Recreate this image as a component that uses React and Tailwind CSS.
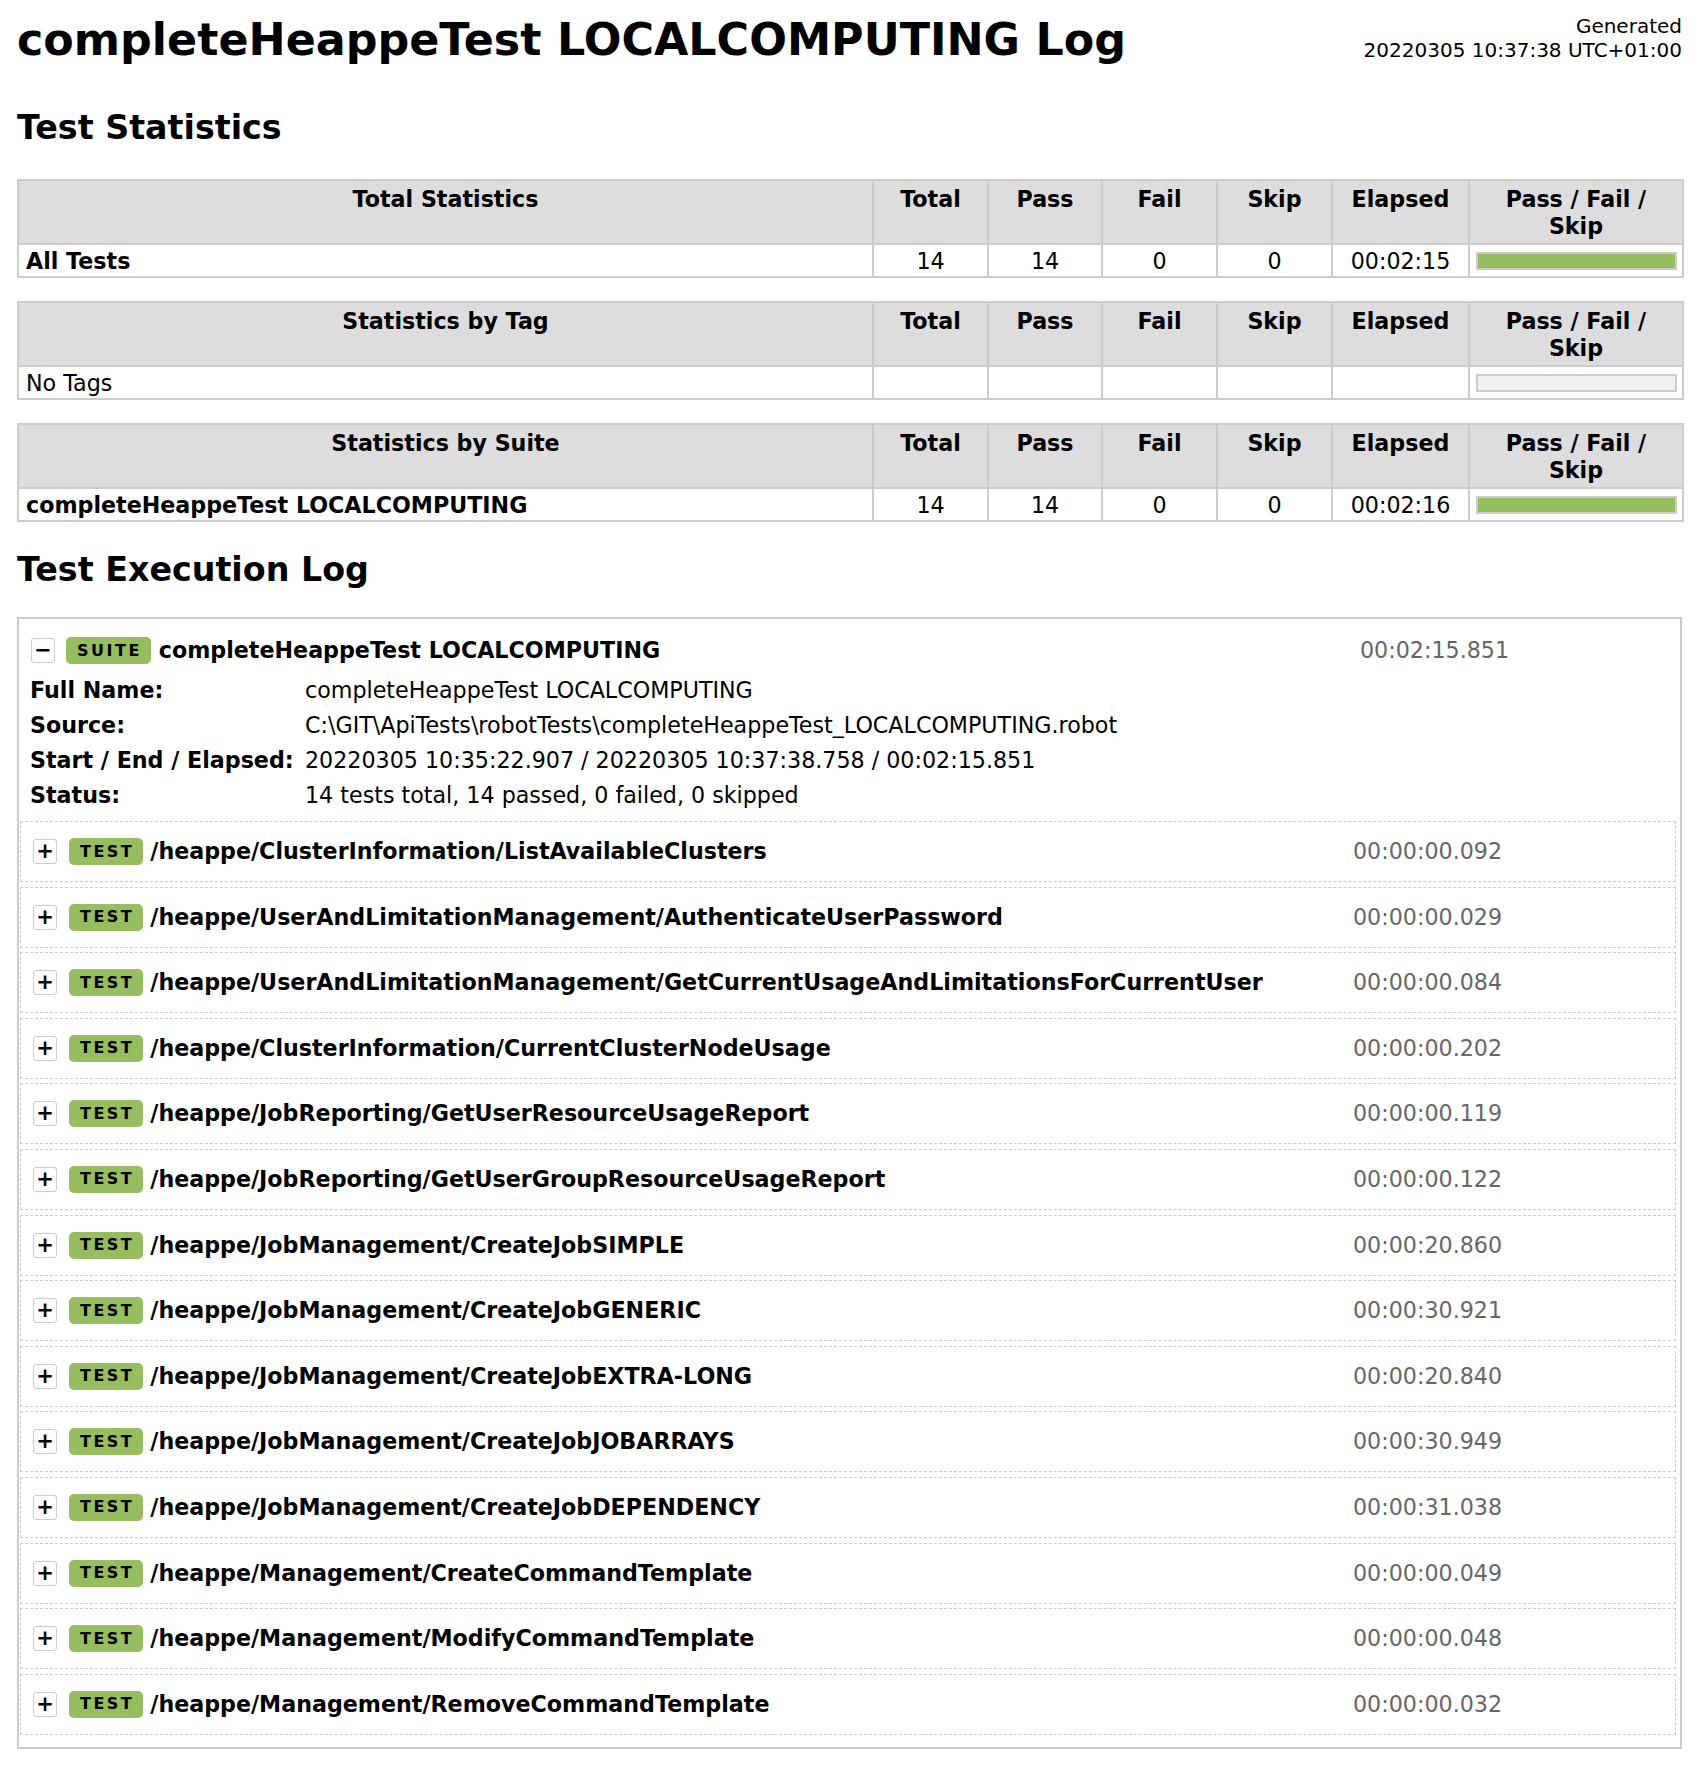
import React from 'react';

const TESTS = [
  ['/heappe/ClusterInformation/ListAvailableClusters', '00:00:00.092'],
  ['/heappe/UserAndLimitationManagement/AuthenticateUserPassword', '00:00:00.029'],
  ['/heappe/UserAndLimitationManagement/GetCurrentUsageAndLimitationsForCurrentUser', '00:00:00.084'],
  ['/heappe/ClusterInformation/CurrentClusterNodeUsage', '00:00:00.202'],
  ['/heappe/JobReporting/GetUserResourceUsageReport', '00:00:00.119'],
  ['/heappe/JobReporting/GetUserGroupResourceUsageReport', '00:00:00.122'],
  ['/heappe/JobManagement/CreateJobSIMPLE', '00:00:20.860'],
  ['/heappe/JobManagement/CreateJobGENERIC', '00:00:30.921'],
  ['/heappe/JobManagement/CreateJobEXTRA-LONG', '00:00:20.840'],
  ['/heappe/JobManagement/CreateJobJOBARRAYS', '00:00:30.949'],
  ['/heappe/JobManagement/CreateJobDEPENDENCY', '00:00:31.038'],
  ['/heappe/Management/CreateCommandTemplate', '00:00:00.049'],
  ['/heappe/Management/ModifyCommandTemplate', '00:00:00.048'],
  ['/heappe/Management/RemoveCommandTemplate', '00:00:00.032'],
];

const META = [
  ['Full Name:', 'completeHeappeTest LOCALCOMPUTING'],
  ['Source:', 'C:\\GIT\\ApiTests\\robotTests\\completeHeappeTest_LOCALCOMPUTING.robot'],
  ['Start / End / Elapsed:', '20220305 10:35:22.907 / 20220305 10:37:38.758 / 00:02:15.851'],
  ['Status:', '14 tests total, 14 passed, 0 failed, 0 skipped'],
];

function StatTable({ title, row, className }) {
  const th = 'border border-[#ccc] bg-[#ddd] pt-[5px] pb-[3px] px-[6px] align-top text-center font-bold';
  const td = 'border border-[#ccc] pt-[3px] pb-[1px] px-[6px] text-center';
  return (
    <table className={`w-[1665px] table-fixed border-separate border-spacing-0 border border-[#ccc] text-[22.2px] leading-[27px] ${className}`}>
      <colgroup>
        <col className="w-[855px]" />
        <col className="w-[115px]" />
        <col className="w-[114px]" />
        <col className="w-[115px]" />
        <col className="w-[115px]" />
        <col className="w-[137px]" />
        <col className="w-[214px]" />
      </colgroup>
      <thead>
        <tr>
          <th className={th}>{title}</th>
          <th className={th}>Total</th>
          <th className={th}>Pass</th>
          <th className={th}>Fail</th>
          <th className={th}>Skip</th>
          <th className={th}>Elapsed</th>
          <th className={th}>Pass / Fail / Skip</th>
        </tr>
      </thead>
      <tbody>
        <tr>
          <td className={`border border-[#ccc] pt-[3px] pb-[1px] px-[7px] text-left ${row.bold ? 'font-bold' : ''}`}>{row.name}</td>
          <td className={td}>{row.total}</td>
          <td className={td}>{row.pass}</td>
          <td className={td}>{row.fail}</td>
          <td className={td}>{row.skip}</td>
          <td className={td}>{row.elapsed}</td>
          <td className="border border-[#ccc] pt-[2px] pb-[2px] pl-[6px] pr-[5px] align-middle">
            {row.empty ? (
              <div className="h-[18px] w-full border-2 border-[#ccc] bg-[#f0f0f0]" />
            ) : (
              <div className="h-[18px] w-full border-2 border-[#ccc] bg-[#97bd61]" />
            )}
          </td>
        </tr>
      </tbody>
    </table>
  );
}

function Toggle({ sign }) {
  return (
    <div className="flex h-[25px] w-[24px] shrink-0 items-center justify-center rounded-[3px] border border-[#ccc] bg-white text-[21px] font-bold leading-none text-black">
      {sign}
    </div>
  );
}

function Badge({ text }) {
  return (
    <div className="flex h-[27px] shrink-0 items-center rounded-[5px] bg-[#97bd61] pl-[11px] pr-[9px] text-[16px] font-bold leading-none tracking-[2.5px] text-black">
      {text}
    </div>
  );
}

export default function App() {
  return (
    <div
      className="min-h-[1768px] bg-white pt-[14px] pl-[17px] pr-[18px] pb-[20px] text-black"
      style={{ fontFamily: '"DejaVu Sans", Verdana, sans-serif' }}
    >
      {/* Header */}
      <div className="flex items-start justify-between">
        <h1 className="text-[44.4px] font-bold leading-[51px]">completeHeappeTest LOCALCOMPUTING Log</h1>
        <div className="pt-[1px] text-right text-[20px] leading-[23.5px]">
          <div>Generated</div>
          <div>20220305 10:37:38 UTC+01:00</div>
        </div>
      </div>

      <h2 className="mt-[44px] text-[33.3px] font-bold leading-[38px]">Test Statistics</h2>

      <StatTable
        className="mt-[32px]"
        title="Total Statistics"
        row={{ name: 'All Tests', bold: true, total: '14', pass: '14', fail: '0', skip: '0', elapsed: '00:02:15' }}
      />
      <StatTable
        className="mt-[23px]"
        title="Statistics by Tag"
        row={{ name: 'No Tags', bold: false, total: '', pass: '', fail: '', skip: '', elapsed: '', empty: true }}
      />
      <StatTable
        className="mt-[23px]"
        title="Statistics by Suite"
        row={{ name: 'completeHeappeTest LOCALCOMPUTING', bold: true, total: '14', pass: '14', fail: '0', skip: '0', elapsed: '00:02:16' }}
      />

      <h2 className="mt-[29px] text-[33.3px] font-bold leading-[38px]">Test Execution Log</h2>

      {/* Suite */}
      <div className="mt-[28px] w-[1665px] border-2 border-[#ccc] pb-[12px]">
        <div className="mt-[18px] flex h-[27px] items-center pl-[12px]">
          <Toggle sign="−" />
          <div className="ml-[11px]">
            <Badge text="SUITE" />
          </div>
          <div className="ml-[8px] flex-1 text-[22.2px] font-bold leading-[27px]">completeHeappeTest LOCALCOMPUTING</div>
          <div className="w-[320px] shrink-0 text-[22.2px] leading-[27px] text-[#666]">00:02:15.851</div>
        </div>

        <div className="mt-[9px] grid grid-cols-[275px_1fr] pl-[11px] text-[22.2px] leading-[35px]">
          {META.map(([label, value]) => (
            <React.Fragment key={label}>
              <div className="font-bold">{label}</div>
              <div>{value}</div>
            </React.Fragment>
          ))}
        </div>

        <div className="mt-[8px] ml-[1px] mr-[4px] flex flex-col gap-[4.6px]">
          {TESTS.map(([name, elapsed]) => (
            <div key={name} className="flex h-[61px] items-center border border-dashed border-[#ccc] pl-[12px]">
              <Toggle sign="+" />
              <div className="ml-[12px]">
                <Badge text="TEST" />
              </div>
              <div className="ml-[7px] flex-1 text-[22.2px] font-bold leading-[27px]">{name}</div>
              <div className="w-[322px] shrink-0 text-[22.2px] leading-[27px] text-[#666]">{elapsed}</div>
            </div>
          ))}
        </div>
      </div>
    </div>
  );
}
